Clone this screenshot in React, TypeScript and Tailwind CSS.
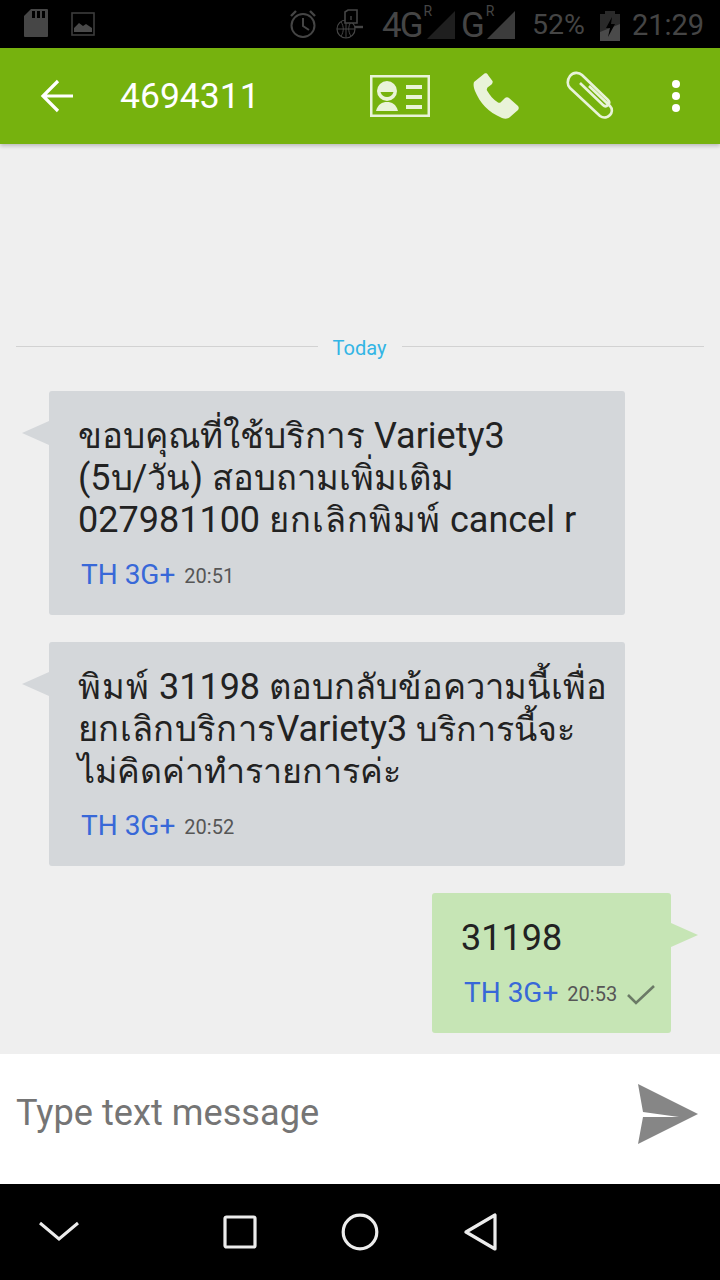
import React from "react";

const font = { fontFamily: 'Roboto, "Noto Sans", "DejaVu Sans", sans-serif' };

function StatusBar() {
  return (
    <div className="h-[48px] bg-black flex items-center text-[#454545] shrink-0">
      <svg width="24" height="30" viewBox="0 0 24 30" className="ml-[24px] mt-[-2px]">
        <path d="M7 1h16a1 1 0 0 1 1 1v26a1 1 0 0 1-1 1H1a1 1 0 0 1-1-1V8z" fill="#464646" />
        <rect x="8" y="3" width="3" height="7" fill="#000" />
        <rect x="13" y="3" width="3" height="7" fill="#000" />
        <rect x="18" y="3" width="3" height="7" fill="#000" />
      </svg>
      <svg width="24" height="24" viewBox="0 0 24 24" className="ml-[23px]">
        <rect x="1" y="1" width="22" height="22" fill="none" stroke="#3c3c3c" strokeWidth="1.6" />
        <path d="M3 20v-4l5-5 4 3 3-2 6 4v4z" fill="#4a4a4a" />
      </svg>
      <svg width="28" height="30" viewBox="0 0 28 30" className="ml-[194px]" fill="none" stroke="#454545">
        <circle cx="14" cy="16.5" r="11.5" strokeWidth="2" />
        <path d="M14 9v8l6 4" strokeWidth="2" />
        <path d="M2 7l5-5M26 7l-5-5" strokeWidth="2.4" />
      </svg>
      <svg width="30" height="30" viewBox="0 0 30 30" className="ml-[19px]" fill="none" stroke="#454545">
        <circle cx="10" cy="20" r="9" strokeWidth="1.2" />
        <path d="M1 20h18M10 11v18M5 13c3 4 3 10 0 14M15 13c-3 4-3 10 0 14" strokeWidth="1" />
        <path d="M9 3l3-2h9v13H9z" fill="#000" strokeWidth="1.6" />
        <path d="M15 11V7" strokeWidth="1.4" />
        <path d="M19 18h8" strokeWidth="2.4" />
      </svg>
      <div className="ml-[16px] flex items-center w-[71px]">
        <span className="text-[35px] leading-none tracking-[-2px] mt-[2px]">4G</span>
        <span className="text-[14px] leading-none self-start mt-[-2px] ml-[2px]">R</span>
        <svg width="28" height="28" viewBox="0 0 28 28" className="ml-[-5px] mt-[1px] shrink-0">
          <path d="M28 0v28H0z" fill="#1f1f1f" />
        </svg>
      </div>
      <div className="ml-[8px] flex items-center w-[55px]">
        <span className="text-[35px] leading-none mt-[2px]">G</span>
        <span className="text-[14px] leading-none self-start mt-[-2px] ml-[1px]">R</span>
        <svg width="28" height="28" viewBox="0 0 28 28" className="ml-[-7px] mt-[1px] shrink-0">
          <path d="M28 0v28H0z" fill="#3c3c3c" />
        </svg>
      </div>
      <span className="ml-[16px] text-[28.5px] leading-none mt-[3px]">52%</span>
      <svg width="20" height="30" viewBox="0 0 20 30" className="ml-[15px] mt-[3px]">
        <path d="M5 0h10v3h5v27H0V3h5z" fill="#2a2a2a" />
        <path d="M0 30V21l20-8v17z" fill="#4a4a4a" />
        <path d="M12 6l-6 11h4l-2 9 7-13h-4z" fill="#000" />
      </svg>
      <span className="ml-[12px] text-[29px] leading-none mt-[3px]">21:29</span>
    </div>
  );
}

function Toolbar() {
  return (
    <div className="relative z-10 h-[96px] bg-[#76b20e] flex items-center shrink-0 shadow-[0_2px_4px_rgba(0,0,0,0.22)]">
      <svg width="34" height="34" viewBox="0 0 34 34" className="ml-[40px]" fill="none" stroke="#fff" strokeWidth="3.2">
        <path d="M33 17H3M18 2L3 17l15 15" />
      </svg>
      <span className="ml-[46px] text-white text-[35.5px] leading-none mt-[2px]">4694311</span>
      <svg width="60" height="42" viewBox="0 0 60 42" className="ml-[110px]">
        <rect x="1.25" y="1.25" width="57.5" height="39.5" fill="none" stroke="#e9f3d9" strokeWidth="2.5" />
        <path d="M17 6a10 10 0 0 1 10 10 10 10 0 0 1-20 0A10 10 0 0 1 17 6z" fill="#e9f3d9" />
        <path d="M10.5 17h13c-1 3.500-3.500 5-6.500 5s-5.500-1.500-6.500-5z" fill="#76b20e" />
        <path d="M6 36c2-7 6-9 11-9s9 2 11 9z" fill="#e9f3d9" />
        <rect x="36" y="10" width="16" height="4" fill="#e9f3d9" />
        <rect x="36" y="20" width="16" height="4" fill="#e9f3d9" />
        <rect x="36" y="30" width="16" height="4" fill="#e9f3d9" />
      </svg>
      <svg width="46" height="46" viewBox="0 0 46 46" className="ml-[43px]">
        <path d="M1 9c-1 3 0 6 1 9 5 12 13 21 27 27 3 1 6 1 8-1l8-7c1-1 1-3 0-4l-9-8c-1-1-3-1-4 0l-4 4c-1 1-2 1-3 .5-5-3-8-7-11-12-.5-1 0-2 .5-3l4-3c1-1 1.500-2 1-3.500L15 2c-.5-1.500-2-2.200-3.500-1.500z" fill="#e9f3d9" />
      </svg>
      <svg width="54" height="50" viewBox="0 0 54 50" className="ml-[47px]" fill="none" stroke="#e9f3d9" strokeWidth="2.600">
        <path d="M23 15l21 20c3 3 2 7 0 9s-6 4-10 1L4 17C1 14 1 9 4 5s9-4 12-1l26 25c2 2 1 4 0 5s-3 2-5 0L14 12" />
      </svg>
      <div className="ml-[52px] flex flex-col gap-[4px]">
        <span className="block w-[8px] h-[8px] rounded-full bg-white" />
        <span className="block w-[8px] h-[8px] rounded-full bg-white" />
        <span className="block w-[8px] h-[8px] rounded-full bg-white" />
      </div>
    </div>
  );
}

function Meta({ time, check }: { time: string; check?: boolean }) {
  return (
    <div className="flex items-center ml-[3px] mt-[15px] h-[38px]">
      <span className="text-[28px] leading-none text-[#3868d8]">TH 3G+</span>
      <span className="ml-[9px] text-[20px] leading-none text-[#565656] mt-[2px]">{time}</span>
      {check && (
        <svg width="28" height="22" viewBox="0 0 28 22" className="ml-[10px] mt-[3px]" fill="none" stroke="#6b7a66" strokeWidth="2.600">
          <path d="M1 11l8 8L27 2" />
        </svg>
      )}
    </div>
  );
}

function Line({ children }: { children: React.ReactNode }) {
  return <div className="h-[42px] text-[36px] leading-[42px] text-[#222] whitespace-nowrap">{children}</div>;
}

function Th({ children }: { children: React.ReactNode }) {
  return <span className="text-[34.5px]">{children}</span>;
}

function Wide({ children }: { children: React.ReactNode }) {
  return <span className="text-[34.5px] tracking-[1px]">{children}</span>;
}

function Incoming({ lines, time }: { lines: React.ReactNode[]; time: string }) {
  return (
    <div className="relative ml-[49px] w-[576px] h-[224px] bg-[#d4d7da] rounded-[3px] pl-[29px] pt-[24px]">
      <div className="absolute left-[-27px] top-[30px] w-0 h-0 border-y-[12px] border-y-transparent border-r-[27px] border-r-[#d4d7da]" />
      {lines.map((l, i) => (
        <Line key={i}>{l}</Line>
      ))}
      <Meta time={time} />
    </div>
  );
}

export default function App() {
  return (
    <div className="w-[720px] h-[1280px] flex flex-col overflow-hidden bg-[#efefef]" style={font}>
      <StatusBar />
      <Toolbar />
      <main className="flex-1 flex flex-col justify-end pb-[21px]">
        <div className="flex items-center px-[16px] mb-[33px]">
          <div className="flex-1 h-px bg-[#d2d2d2] mt-[-3px]" />
          <span className="mx-[16px] text-[20px] leading-none text-[#33b5e5] ml-[15px]">Today</span>
          <div className="flex-1 h-px bg-[#d2d2d2] mt-[-3px]" />
        </div>
        <div className="flex flex-col gap-[27px]">
          <Incoming
            time="20:51"
            lines={[
              <><span className="text-[35px]">ขอบคุณที่ใช้บริการ</span> Variety3</>,
              <>(5<Th>บ</Th>/<Th>วัน</Th>) <Th>สอบถามเพิ่มเติม</Th></>,
              <>027981100 <Wide>ยกเลิกพิมพ์</Wide> cancel r</>,
            ]}
          />
          <Incoming
            time="20:52"
            lines={[
              <><Wide>พิมพ์</Wide> 31198 <Th>ตอบกลับข้อความนี้เพื่อ</Th></>,
              <><span className="text-[34.5px] tracking-[0.35px]">ยกเลิกบริการ</span>Variety3 <span className="text-[34px]">บริการนี้จะ</span></>,
              <><span className="text-[34px]">ไม่คิดค่าทำรายการค่ะ</span></>,
            ]}
          />
          <div className="relative ml-[432px] w-[239px] h-[140px] bg-[#c6e5b5] rounded-[3px] pl-[29px] pt-[24px]">
            <div className="absolute right-[-27px] top-[30px] w-0 h-0 border-y-[12px] border-y-transparent border-l-[27px] border-l-[#c6e5b5]" />
            <Line>31198</Line>
            <Meta time="20:53" check />
          </div>
        </div>
      </main>
      <div className="h-[130px] bg-white flex items-center shrink-0">
        <span className="ml-[16px] text-[36.2px] leading-none text-[#757575] mb-[11px]">Type text message</span>
        <svg width="62" height="62" viewBox="0 0 62 62" className="ml-auto mr-[21px] mb-[10px]">
          <path d="M1 1l60 30L1 61l5-27h36L6 29z" fill="#868686" />
        </svg>
      </div>
      <div className="h-[96px] bg-black flex items-center shrink-0">
        <svg width="42" height="24" viewBox="0 0 42 24" className="ml-[38px]" fill="none" stroke="#ececec" strokeWidth="3">
          <path d="M2 3l19 16L40 3" />
        </svg>
        <svg width="34" height="34" viewBox="0 0 34 34" className="ml-[143px]" fill="none" stroke="#ececec" strokeWidth="3.200">
          <rect x="2" y="2" width="30" height="30" rx="1.500" />
        </svg>
        <svg width="38" height="38" viewBox="0 0 38 38" className="ml-[84px]" fill="none" stroke="#ececec" strokeWidth="3.200">
          <circle cx="19" cy="19" r="16.800" />
        </svg>
        <svg width="34" height="38" viewBox="0 0 34 38" className="ml-[85px]" fill="none" stroke="#ececec" strokeWidth="3.200" strokeLinejoin="round">
          <path d="M31 2v34L2 19z" />
        </svg>
      </div>
    </div>
  );
}
